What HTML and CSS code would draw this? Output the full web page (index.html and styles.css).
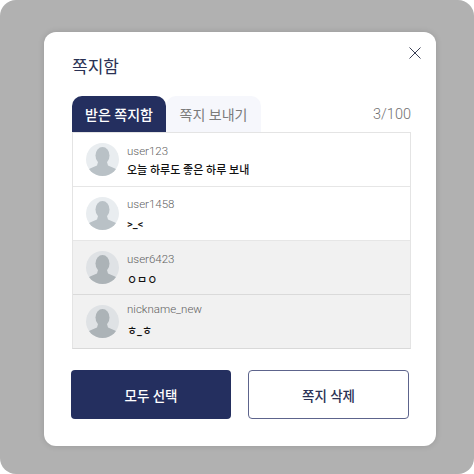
FILE: index.html
```html
<!DOCTYPE html>
<html lang="ko">
<head>
<meta charset="utf-8">
<title>쪽지함</title>
<link rel="stylesheet" href="styles.css">
</head>
<body>
<div class="backdrop">
  <section class="modal">
    <button class="close" aria-label="닫기">
      <svg width="14" height="14" viewBox="0 0 14 14"><path d="M1.500 1.500 12.500 12.500M12.500 1.500 1.500 12.500" fill="none" stroke="#3a3f55" stroke-width="1"/></svg>
    </button>
    <h1 class="title">쪽지함</h1>
    <div class="tabbar">
      <div class="tab tab-active">받은 쪽지함</div>
      <div class="tab tab-idle">쪽지 보내기</div>
      <div class="count">3/100</div>
    </div>
    <ul class="list">
      <li class="row">
        <svg class="avatar" viewBox="0 0 33 33"><defs><clipPath id="c1"><circle cx="16.500" cy="16.500" r="16.500"/></clipPath></defs><circle cx="16.500" cy="16.500" r="16.500" fill="#e9edf0"/><g clip-path="url(#c1)" fill="#b9c1c6"><ellipse cx="16.500" cy="12.500" rx="7" ry="8.500"/><path d="M12 19h9l1 3.500 7 3c2 1 2.500 3 2.500 7.500h-30c0-4.500.5-6.500 2.500-7.500l7-3z"/></g></svg>
        <div class="text text-a"><div class="name">user123</div><div class="msg">오늘 하루도 좋은 하루 보내</div></div>
      </li>
      <li class="row">
        <svg class="avatar" viewBox="0 0 33 33"><defs><clipPath id="c2"><circle cx="16.500" cy="16.500" r="16.500"/></clipPath></defs><circle cx="16.500" cy="16.500" r="16.500" fill="#e9edf0"/><g clip-path="url(#c2)" fill="#b9c1c6"><ellipse cx="16.500" cy="12.500" rx="7" ry="8.500"/><path d="M12 19h9l1 3.500 7 3c2 1 2.500 3 2.500 7.500h-30c0-4.500.5-6.500 2.500-7.500l7-3z"/></g></svg>
        <div class="text text-b"><div class="name">user1458</div><div class="msg">&gt;_&lt;</div></div>
      </li>
      <li class="row row-read">
        <svg class="avatar" viewBox="0 0 33 33"><defs><clipPath id="c3"><circle cx="16.500" cy="16.500" r="16.500"/></clipPath></defs><circle cx="16.500" cy="16.500" r="16.500" fill="#dfe2e5"/><g clip-path="url(#c3)" fill="#acb3b7"><ellipse cx="16.500" cy="12.500" rx="7" ry="8.500"/><path d="M12 19h9l1 3.500 7 3c2 1 2.500 3 2.500 7.500h-30c0-4.500.5-6.500 2.500-7.500l7-3z"/></g></svg>
        <div class="text text-c"><div class="name">user6423</div><div class="msg">ㅇㅁㅇ</div></div>
      </li>
      <li class="row row-read">
        <svg class="avatar" viewBox="0 0 33 33"><defs><clipPath id="c4"><circle cx="16.500" cy="16.500" r="16.500"/></clipPath></defs><circle cx="16.500" cy="16.500" r="16.500" fill="#dfe2e5"/><g clip-path="url(#c4)" fill="#acb3b7"><ellipse cx="16.500" cy="12.500" rx="7" ry="8.500"/><path d="M12 19h9l1 3.500 7 3c2 1 2.500 3 2.500 7.500h-30c0-4.500.5-6.500 2.500-7.500l7-3z"/></g></svg>
        <div class="text text-d"><div class="name">nickname_new</div><div class="msg">ㅎ_ㅎ</div></div>
      </li>
    </ul>
    <div class="actions">
      <button class="btn btn-primary">모두 선택</button>
      <button class="btn btn-outline">쪽지 삭제</button>
    </div>
  </section>
</div>
</body>
</html>
```
FILE: styles.css
```css
* { box-sizing: border-box; }
html, body { margin: 0; padding: 0; background: #fff; }
body { font-family: Roboto, "Noto Sans CJK KR", sans-serif; }
.backdrop {
  width: 474px; height: 474px; background: #b1b1b1; border-radius: 16px;
  padding: 32px 38px 28px 44px;
}
.modal {
  position: relative; width: 392px; height: 414px; background: #fff; border-radius: 12px;
  padding: 23px 25px 0 28px; box-shadow: 0 0 6px rgba(0,0,0,.14);
}
.close {
  position: absolute; top: 14px; right: 14px; width: 14px; height: 14px;
  padding: 0; border: 0; background: none; display: block;
}
.close svg { display: block; }
.title { margin: 0; font-size: 17px; line-height: 24px; font-weight: 400; color: #2a3154; }
.tabbar { display: flex; align-items: stretch; height: 36px; margin-top: 17px; }
.tab { display: flex; align-items: center; justify-content: center; font-size: 14px; border-radius: 10px 10px 0 0; }
.tab-active { width: 94px; background: #242f5f; color: #fff; font-weight: 500; }
.tab-idle { width: 95px; background: #f6f7fc; color: #7b7b7b; }
.count { margin-left: auto; align-self: center; font-size: 14.500px; font-weight: 300; color: #6f6f6f; }
.list { list-style: none; margin: 0; padding: 0; width: 339px; border: 1px solid #e4e4e4; border-bottom-color: #d9d9d9; }
.row { display: flex; align-items: flex-start; height: 54px; padding: 10px 0 0 13px; border-bottom: 1px solid #e6e6e6; }
.row:last-child { height: 53px; border-bottom: 0; }
.row-read { background: #f1f1f1; border-bottom-color: #dadada; }
.avatar { width: 33px; height: 33px; flex: none; }
.text { margin-left: 8px; }
.text-a { margin-top: 0; }
.text-b { margin-top: -1px; }
.text-c { margin-top: 0; }
.text-d { margin-top: -4px; }
.name { font-size: 11.500px; line-height: 16px; font-weight: 300; color: #5f5f5f; }
.msg { font-size: 11px; line-height: 16px; font-weight: 500; color: #111; }
.text-a .msg { margin-top: 4px; }
.text-b .msg { margin-top: 5px; }
.text-c .msg { margin-top: 6px; }
.text-d .msg { margin-top: 7px; }
.actions { display: flex; margin: 21px 0 0 -1px; gap: 17px; }
.btn { height: 49px; width: 161px; border-radius: 4px; font: 500 13.500px Roboto, "Noto Sans CJK KR", sans-serif; }
.btn-primary { width: 160px; background: #242f5f; border: 0; color: #fff; }
.btn-outline { background: #fff; border: 1px solid #5d648c; color: #2a3154; }
```
